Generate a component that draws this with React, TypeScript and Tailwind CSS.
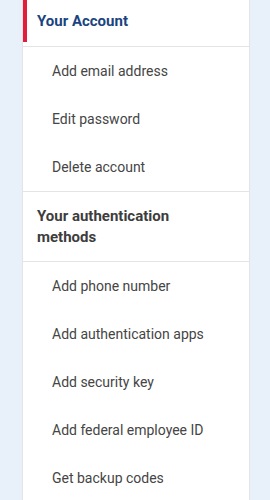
const accountLinks = ['Add email address', 'Edit password', 'Delete account'];
const authLinks = [
  'Add phone number',
  'Add authentication apps',
  'Add security key',
  'Add federal employee ID',
  'Get backup codes',
];

function NavItem({ label }: { label: string }) {
  return (
    <a href="#" className="flex h-12 items-center pl-[29px] text-[14px] text-[#454545]">
      {label}
    </a>
  );
}

export default function App() {
  return (
    <div
      className="min-h-[500px] bg-[#e8f1fa] pl-[22px] pr-[20px]"
      style={{ fontFamily: 'Roboto, "Liberation Sans", sans-serif' }}
    >
      <nav className="min-h-[500px] border-l border-r border-[#e4e4e4] bg-white">
        <div className="flex h-[47px] border-b border-[#e4e4e4]">
          <div className="h-[42px] w-1 bg-[#e21c3d]" />
          <div className="flex h-[42px] items-center pl-[10px] text-[15px] font-bold text-[#1a4480]">
            Your Account
          </div>
        </div>
        {accountLinks.map((l) => (
          <NavItem key={l} label={l} />
        ))}
        <div className="border-t border-b border-[#e4e4e4] pt-[14px] pb-[13px] pl-[14px] pr-[60px] text-[15px] font-bold leading-[21px] text-[#3d3d3d]">
          Your authentication methods
        </div>
        {authLinks.map((l) => (
          <NavItem key={l} label={l} />
        ))}
      </nav>
    </div>
  );
}
